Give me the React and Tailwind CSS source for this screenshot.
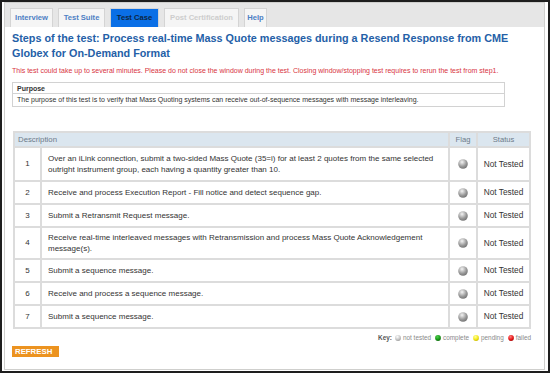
import React from "react";

const rows = [
  { n: 1, h: "h-[32px]", t: "Over an iLink connection, submit a two-sided Mass Quote (35=i) for at least 2 quotes from the same selected outright instrument group, each having a quantity greater than 10." },
  { n: 2, h: "h-[21px]", t: "Receive and process Execution Report - Fill notice and detect sequence gap." },
  { n: 3, h: "h-[21px]", t: "Submit a Retransmit Request message." },
  { n: 4, h: "h-[30px]", t: "Receive real-time interleaved messages with Retransmission and process Mass Quote Acknowledgement message(s)." },
  { n: 5, h: "h-[21px]", t: "Submit a sequence message." },
  { n: 6, h: "h-[21px]", t: "Receive and process a sequence message." },
  { n: 7, h: "h-[21px]", t: "Submit a sequence message." },
];

function Sphere({ id, size = 10, c1 = "#f4f4f4", c2 = "#9a9a9a", c3 = "#6f6f6f" }) {
  return (
    <svg width={size} height={size} viewBox="0 0 10 10" className="inline-block shrink-0">
      <defs>
        <radialGradient id={id} cx="0.4" cy="0.3" r="0.75">
          <stop offset="0" stopColor={c1} />
          <stop offset="0.6" stopColor={c2} />
          <stop offset="1" stopColor={c3} />
        </radialGradient>
      </defs>
      <circle cx="5" cy="5" r="4.8" fill={`url(#${id})`} />
    </svg>
  );
}

const tabs = [
  { label: "Interview", w: "w-[43px]", cls: "bg-[#f5f5f5] text-[#4d7fc4]" },
  { label: "Test Suite", w: "w-[47px]", cls: "bg-[#f5f5f5] text-[#4d7fc4]" },
  { label: "Test Case", w: "w-[49px]", cls: "bg-[#0a6fe6] text-[#0c2644]" },
  { label: "Post Certification", w: "w-[75px]", cls: "bg-[#f5f5f5] text-[#cdcdcd]" },
  { label: "Help", w: "w-[23px]", cls: "bg-[#f5f5f5] text-[#4d7fc4]" },
];

export default function App() {
  return (
    <div
      className="w-[550px] h-[373px] border-2 border-[#1e1e1e] bg-white pl-[2px] pr-[3px] pb-[1px] box-border overflow-hidden"
      style={{ fontFamily: '"Liberation Sans", Arial, sans-serif' }}
    >
      <div className="h-full border border-[#cfcfcd] bg-white flex flex-col">
        {/* tab bar */}
        <div className="h-[24px] bg-[#e6e6e6] flex items-end gap-[5px] pl-[5px]">
          {tabs.map((t) => (
            <div
              key={t.label}
              className={`${t.w} h-[19px] flex items-center justify-center text-[7.6px] font-bold border border-b-0 border-[#d4d4d4] whitespace-nowrap ${t.cls}`}
            >
              {t.label}
            </div>
          ))}
        </div>

        <div className="pl-[7px] pr-[12px] flex flex-col">
          <h1 className="mt-[4px] text-[10.8px] leading-[15px] font-bold text-[#2460a7]">
            Steps of the test: Process real-time Mass Quote messages during a Resend Response from CME Globex for On-Demand Format
          </h1>
          <p className="mt-[5px] text-[7px] leading-[10px] text-[#d8343f] whitespace-nowrap">
            This test could take up to several minutes. Please do not close the window during the test. Closing window/stopping test requires to rerun the test from step1.
          </p>

          <div className="mt-[6px] w-[493px] border border-[#d2d2d2]">
            <div className="h-[11px] pl-[4px] text-[7px] leading-[11px] font-bold text-[#333] border-b border-[#d2d2d2]">
              Purpose
            </div>
            <div className="h-[12px] pl-[4px] text-[7px] leading-[12px] text-[#333] whitespace-nowrap">
              The purpose of this test is to verify that Mass Quoting systems can receive out-of-sequence messages with message interleaving.
            </div>
          </div>

          <table className="mt-[24px] ml-[1px] w-[518px] border-separate border-spacing-[2px] bg-[#dcdcdc] text-[8px] text-[#333] table-fixed">
            <colgroup>
              <col className="w-[25px]" />
              <col />
              <col className="w-[26px]" />
              <col className="w-[51px]" />
            </colgroup>
            <thead>
              <tr className="h-[13px]">
                <th colSpan={2} className="bg-[#dbe6ef] text-left pl-[3px] font-normal text-[7.8px] text-[#6c7a89]">
                  Description
                </th>
                <th className="bg-[#dbe6ef] font-normal text-[7.6px] text-[#6c7a89]">Flag</th>
                <th className="bg-[#dbe6ef] font-normal text-[7.6px] text-[#6c7a89]">Status</th>
              </tr>
            </thead>
            <tbody>
              {rows.map((r) => (
                <tr key={r.n} className={r.h}>
                  <td className="bg-white text-center align-middle">{r.n}</td>
                  <td className="bg-white pl-[6px] pr-[4px] leading-[11px] align-middle">{r.t}</td>
                  <td className="bg-white text-center align-middle">
                    <div className="flex items-center justify-center">
                      <Sphere id={`s${r.n}`} />
                    </div>
                  </td>
                  <td className="bg-white text-center align-middle text-[8.3px] whitespace-nowrap">Not Tested</td>
                </tr>
              ))}
            </tbody>
          </table>

          <div className="w-[519px] mt-[4px] flex items-center justify-end gap-[2px] text-[6.4px] text-[#8a8a8a] leading-[10px] whitespace-nowrap">
            <span className="font-bold text-[#555] mr-[1px]">Key:</span>
            <Sphere id="k1" size={6} c1="#ffffff" c2="#c8c8c8" c3="#9a9a9a" />
            <span className="mr-[2px]">not tested</span>
            <Sphere id="k2" size={6} c1="#4fd04f" c2="#1a9a1a" c3="#0c6a0c" />
            <span className="mr-[2px]">complete</span>
            <Sphere id="k3" size={6} c1="#ffffa0" c2="#f4ea1c" c3="#c8b800" />
            <span className="mr-[2px]">pending</span>
            <Sphere id="k4" size={6} c1="#ff8080" c2="#e81c1c" c3="#a80000" />
            <span>failed</span>
          </div>

          <div className="mt-[3px] w-[47px] h-[11px] bg-[#ec9320] text-white font-bold text-[7.8px] leading-[11px] pl-[3px] whitespace-nowrap">
            REFRESH
          </div>
        </div>
      </div>
    </div>
  );
}
